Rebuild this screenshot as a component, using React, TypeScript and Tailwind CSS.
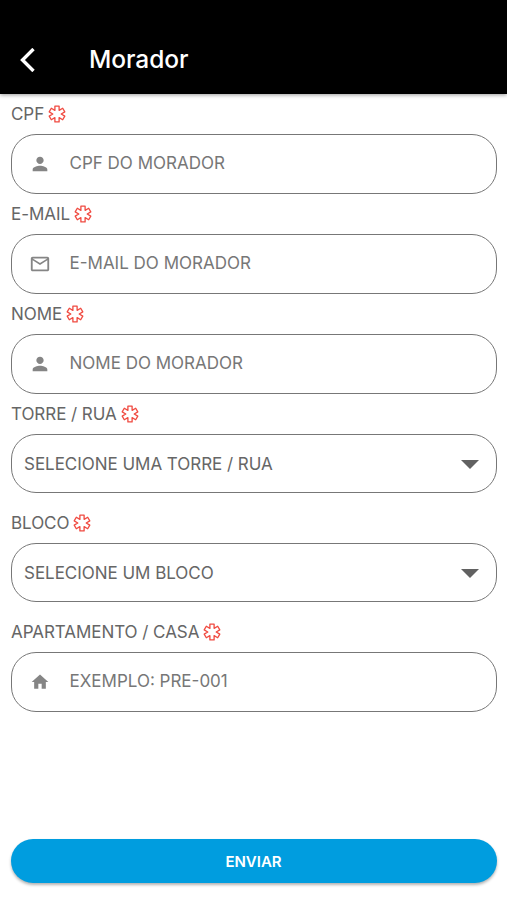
import type { ReactNode } from 'react';
import { MdHome, MdOutlineEmail, MdPerson } from 'react-icons/md';

const RequiredMark = () => (
  <svg className="size-[18px] text-[#f04a40]" viewBox="-9 -9 18 18" fill="none" stroke="currentColor" strokeWidth="1.3" strokeLinejoin="round">
    <path d="M-2.1-7.9h4.2v4.26l3.6-2.08 2.1 3.64L4.2 0l3.6 2.08-2.1 3.64-3.6-2.08V7.9h-4.2V3.64l-3.6 2.08-2.1-3.64L-4.2 0l-3.6-2.08 2.1-3.64 3.6 2.08z" />
  </svg>
);

const Label = ({ children }: { children: ReactNode }) => (
  <div className="flex h-10 items-center gap-1 pl-[0.5px] text-[17px] tracking-[-0.05px] text-[#666]">
    <span className="pt-px">{children}</span>
    <RequiredMark />
  </div>
);

type InputProps = {
  label: string;
  placeholder: string;
  icon: ReactNode;
};

const InputField = ({ label, placeholder, icon }: InputProps) => (
  <div>
    <Label>{label}</Label>
    <div className="flex h-[60px] items-center rounded-[25px] border border-[#777] pl-[17px] text-[#858585]">
      <div className="flex w-[23px] justify-center">{icon}</div>
      <span className="ml-[18px] pb-px text-[17px] text-[#777]">{placeholder}</span>
    </div>
  </div>
);

const SelectField = ({ label, placeholder }: Omit<InputProps, 'icon'>) => (
  <div>
    <Label>{label}</Label>
    <div className="flex h-[59px] items-center justify-between rounded-[25px] border border-[#777] pr-[17px] pl-[12.5px]">
      <span className="pt-0.5 text-[17px] tracking-[-0.03px] text-[#666]">{placeholder}</span>
      <svg className="mt-px h-[9px] w-[18px] text-[#616161]" viewBox="0 0 18 9" fill="currentColor">
        <path d="M0 0h18L9 9z" />
      </svg>
    </div>
  </div>
);

export default function App() {
  return (
    <div className="flex h-[900px] w-[507px] flex-col bg-white font-['Inter',sans-serif]">
      <header className="flex h-[94px] shrink-0 items-center bg-black pt-[26px] pl-5 text-white shadow-[0_1px_4px_rgba(0,0,0,0.4)]">
        <svg className="h-6 w-4" viewBox="0 0 16 24" fill="none" stroke="currentColor" strokeWidth="3.4">
          <path d="M13.5 1 2.5 12l11 11" />
        </svg>
        <h1 className="ml-[53px] pb-px text-[24.5px] font-medium tracking-[-0.05px]">Morador</h1>
      </header>

      <main className="flex grow flex-col px-[10.5px]">
        <InputField label="CPF" placeholder="CPF DO MORADOR" icon={<MdPerson className="size-[22px]" />} />
        <InputField label="E-MAIL" placeholder="E-MAIL DO MORADOR" icon={<MdOutlineEmail className="size-[22px]" />} />
        <InputField label="NOME" placeholder="NOME DO MORADOR" icon={<MdPerson className="size-[22px]" />} />
        <div className="flex flex-col gap-[10px]">
          <SelectField label="TORRE / RUA" placeholder="SELECIONE UMA TORRE / RUA" />
          <SelectField label="BLOCO" placeholder="SELECIONE UM BLOCO" />
          <InputField label="APARTAMENTO / CASA" placeholder="EXEMPLO: PRE-001" icon={<MdHome className="size-5" />} />
        </div>

        <button
          type="button"
          className="mt-auto mb-[17px] h-11 rounded-full bg-[#009ddf] pt-0.5 text-[15px] font-semibold text-white shadow-[0_2px_3px_rgba(0,0,0,0.3)]">
          ENVIAR
        </button>
      </main>
    </div>
  );
}
